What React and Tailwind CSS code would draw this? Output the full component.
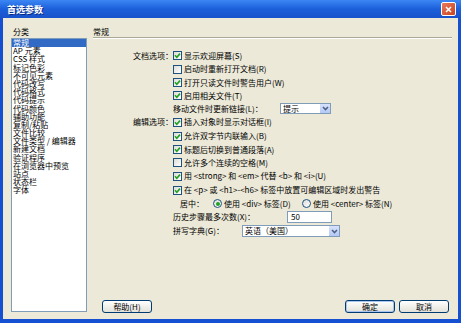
import React from "react";

const Check = ({ checked }) => (
  <span className="w-[9px] h-[9px] border border-[#1C5180] bg-linear-to-br from-[#DCDCD7] to-white flex items-center justify-center shrink-0">
    {checked && (
      <svg width="7" height="7" viewBox="0 0 7 7">
        <path d="M1 3.3 L2.8 5.2 L6 1.6" stroke="#21A121" strokeWidth="1.6" fill="none" />
      </svg>
    )}
  </span>
);

const Radio = ({ checked }) => (
  <span className="w-[9px] h-[9px] rounded-full border border-[#1C5180] bg-linear-to-br from-[#DCDCD7] to-white flex items-center justify-center shrink-0">
    {checked && <span className="w-[4px] h-[4px] rounded-full bg-[#21A121]" />}
  </span>
);

const Arrow = () => (
  <span className="w-[11px] h-full bg-linear-to-b from-[#D7E2FC] to-[#B4C8F6] border-l border-white flex items-center justify-center">
    <svg width="7" height="5" viewBox="0 0 7 5">
      <path d="M1 1 L3.5 3.6 L6 1" stroke="#4D6185" strokeWidth="1.5" fill="none" />
    </svg>
  </span>
);

const items = [
  "常规",
  "AP 元素",
  "CSS 样式",
  "标记色彩",
  "不可见元素",
  "代码改写",
  "代码格式",
  "代码提示",
  "代码颜色",
  "辅助功能",
  "复制/粘贴",
  "文件比较",
  "文件类型 / 编辑器",
  "新建文档",
  "验证程序",
  "在浏览器中预览",
  "站点",
  "状态栏",
  "字体",
];

export default function App() {
  return (
    <div className="w-[461px] h-[323px] bg-[#1650D2] flex flex-col font-['Noto_Sans_CJK_SC','Liberation_Sans',sans-serif] text-black overflow-hidden">
      {/* Title bar */}
      <div className="h-[18px] shrink-0 bg-linear-to-b from-[#3B86F4] via-[#1C5FDA] to-[#1852CB] flex items-center pl-[7px] pr-[5px]">
        <span className="text-white font-bold text-[9px] leading-none [text-shadow:1px_1px_0_#0A2A80]">首选参数</span>
        <span className="ml-auto w-[15px] h-[14px] rounded-[2px] border border-white bg-linear-to-br from-[#E8795A] to-[#C9421E] flex items-center justify-center">
          <svg width="7" height="7" viewBox="0 0 7 7">
            <path d="M1 1 L6 6 M6 1 L1 6" stroke="white" strokeWidth="1.5" />
          </svg>
        </span>
      </div>

      {/* Body */}
      <div className="flex-1 mx-[3px] mb-[4px] bg-[#ECE9D8] flex pl-[8px] pr-[6px] pt-[8px] pb-[7px] text-[8px]">
        {/* Left column */}
        <div className="w-[76px] flex flex-col shrink-0">
          <div className="h-[12px] leading-[12px] pl-[2px]">分类</div>
          <div className="flex-1 bg-white border border-[#7F9DB9] flex flex-col">
            {items.map((it, i) => (
              <div
                key={i}
                className={
                  i === 0
                    ? "h-[8.2px] leading-[8.2px] pl-[1px] bg-[#316AC5] text-white whitespace-pre"
                    : "h-[8.2px] leading-[8.2px] pl-[1px] whitespace-pre"
                }
              >
                {it}
              </div>
            ))}
          </div>
        </div>

        {/* Right column */}
        <div className="flex-1 ml-[6px] flex flex-col">
          <div className="h-[11px] leading-[11px]">常规</div>
          <div className="h-[2px] border-t border-[#ACA899] border-b border-b-white" />

          <div className="mt-[10px] flex flex-col">
            <div className="h-[13px] flex items-center">
              <span className="w-[80px] text-right shrink-0">文档选项：</span>
              <Check checked />
              <span className="ml-[2px]">显示欢迎屏幕(S)</span>
            </div>
            <div className="h-[14px] flex items-center pl-[80px]">
              <Check />
              <span className="ml-[2px]">启动时重新打开文档(R)</span>
            </div>
            <div className="h-[13px] flex items-center pl-[80px]">
              <Check checked />
              <span className="ml-[2px]">打开只读文件时警告用户(W)</span>
            </div>
            <div className="h-[13px] flex items-center pl-[80px]">
              <Check checked />
              <span className="ml-[2px]">启用相关文件(T)</span>
            </div>
            <div className="h-[13px] flex items-center pl-[80px]">
              <span className="w-[107px] shrink-0">移动文件时更新链接(L)：</span>
              <div className="w-[51px] h-[11px] bg-white border border-[#7F9DB9] flex items-center">
                <span className="flex-1 pl-[2px] leading-none">提示</span>
                <Arrow />
              </div>
            </div>
            <div className="h-[14px] flex items-center">
              <span className="w-[80px] text-right shrink-0">编辑选项：</span>
              <Check checked />
              <span className="ml-[2px]">插入对象时显示对话框(I)</span>
            </div>
            <div className="h-[14px] flex items-center pl-[80px]">
              <Check checked />
              <span className="ml-[2px]">允许双字节内联输入(B)</span>
            </div>
            <div className="h-[13px] flex items-center pl-[80px]">
              <Check checked />
              <span className="ml-[2px]">标题后切换到普通段落(A)</span>
            </div>
            <div className="h-[13px] flex items-center pl-[80px]">
              <Check />
              <span className="ml-[2px]">允许多个连续的空格(M)</span>
            </div>
            <div className="h-[14px] flex items-center pl-[80px]">
              <Check checked />
              <span className="ml-[2px] whitespace-pre">{"用 <strong> 和 <em> 代替 <b> 和 <i>(U)"}</span>
            </div>
            <div className="h-[14px] flex items-center pl-[80px]">
              <Check checked />
              <span className="ml-[2px] whitespace-pre">{"在 <p> 或 <h1>-<h6> 标签中放置可编辑区域时发出警告"}</span>
            </div>
            <div className="h-[13px] flex items-center pl-[87px]">
              <span className="w-[33px] shrink-0">居中：</span>
              <Radio checked />
              <span className="ml-[2px] w-[78px] shrink-0 whitespace-pre">{"使用 <div> 标签(D)"}</span>
              <Radio />
              <span className="ml-[2px] whitespace-pre">{"使用 <center> 标签(N)"}</span>
            </div>
            <div className="h-[13px] flex items-center pl-[80px]">
              <span className="w-[114px] shrink-0">历史步骤最多次数(X)：</span>
              <div className="w-[45px] h-[12px] bg-white border border-[#7F9DB9] flex items-center pl-[3px] leading-none">
                50
              </div>
            </div>
            <div className="h-[16px] flex items-center pl-[80px]">
              <span className="w-[69px] shrink-0">拼写字典(G)：</span>
              <div className="w-[98px] h-[12px] bg-white border border-[#7F9DB9] flex items-center">
                <span className="flex-1 pl-[2px] leading-none">英语（美国）</span>
                <Arrow />
              </div>
            </div>
          </div>

          <div className="mt-auto mb-[-1px] flex items-center pl-[9px] pr-[3px]">
            <button className="w-[50px] h-[13px] rounded-[3px] border border-[#003C74] bg-linear-to-b from-white to-[#E3E2DA] text-[8px] leading-none flex items-center justify-center">
              帮助(H)
            </button>
            <button className="ml-auto w-[50px] h-[13px] rounded-[3px] border border-[#003C74] bg-linear-to-b from-white to-[#E3E2DA] shadow-[inset_0_0_0_1px_#A8C6F0] text-[8px] leading-none flex items-center justify-center">
              确定
            </button>
            <button className="ml-[4px] w-[50px] h-[13px] rounded-[3px] border border-[#003C74] bg-linear-to-b from-white to-[#E3E2DA] text-[8px] leading-none flex items-center justify-center">
              取消
            </button>
          </div>
        </div>
      </div>
    </div>
  );
}
